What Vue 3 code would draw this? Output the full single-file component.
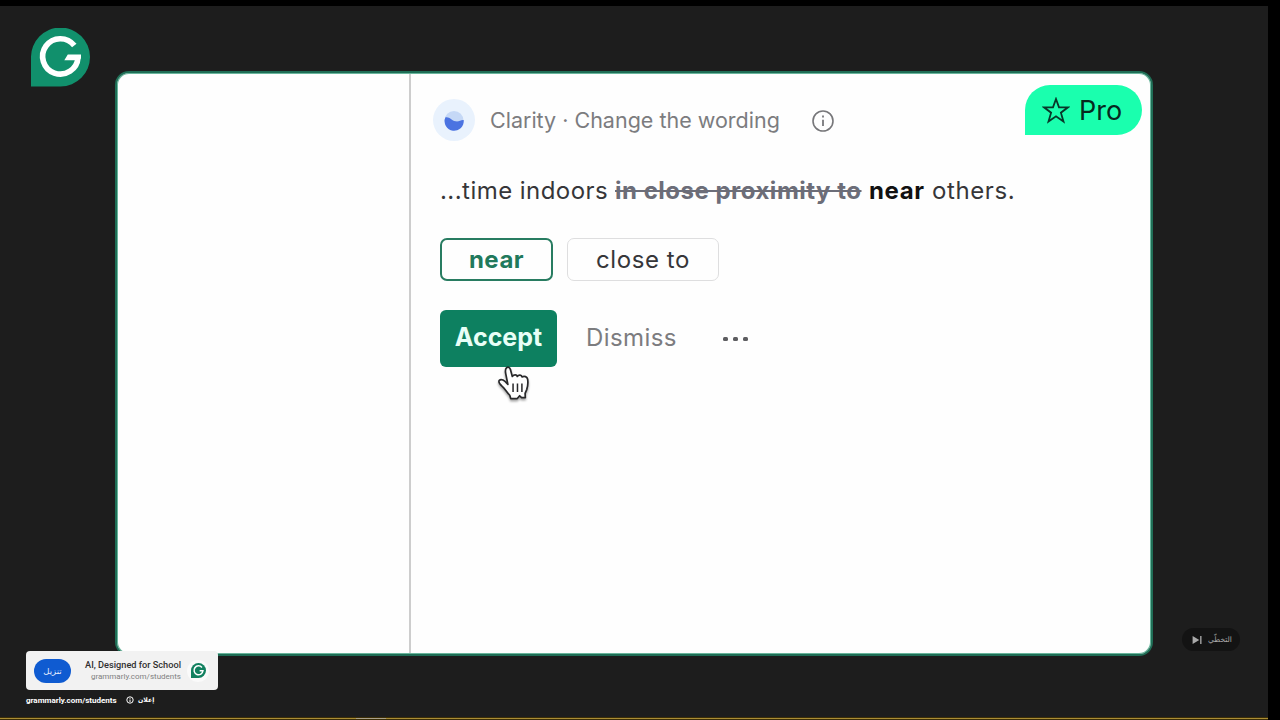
<template>
  <div class="player">
    <div class="video">
      <svg class="brand" viewBox="0 0 59 59">
        <path d="M0 58.500V29.500A29.500 29.500 0 1 1 29.500 58.500Z" fill="#11906c" />
        <path d="M43.300 17.500A17.700 17.700 0 1 0 47 29.500" fill="none" stroke="#fff" stroke-width="5.600" />
        <path d="M36.800 26.500H50V30L47 34H44L45 32.200H33.300Z" fill="#fff" />
      </svg>

      <main class="card">
        <aside class="document"></aside>
        <section class="suggestion">
          <header class="heading">
            <svg class="clarity" viewBox="0 0 42 42">
              <circle cx="21" cy="21" r="21" fill="#e9f2fd" />
              <circle cx="21" cy="21.500" r="9.500" fill="#c5d8f6" />
              <path d="M12.300 18.500C16 17 18.500 21.500 22.500 22.300C26 23 28 20.500 30.700 21A9.600 9.600 0 1 1 12.300 18.500Z" fill="#4b73e1" />
            </svg>
            <span class="category">Clarity · Change the wording</span>
            <svg class="info" viewBox="0 0 22 22" fill="none" stroke="#77777a">
              <circle cx="11" cy="11" r="10" stroke-width="1.600" />
              <path d="M11 9.700V16M11 5.600V7.600" stroke-width="1.800" />
            </svg>
          </header>

          <p class="sentence">
            <span class="before">...time indoors</span>
            <del>in close proximity to</del>
            <strong>near</strong>
            <span class="after">others.</span>
          </p>

          <div class="options">
            <button class="option selected">near</button>
            <button class="option">close to</button>
          </div>

          <div class="actions">
            <button class="accept">Accept</button>
            <button class="dismiss">Dismiss</button>
            <span class="more"><i v-for="n in 3" :key="n"></i></span>
          </div>
        </section>

        <div class="pro">
          <svg viewBox="0 0 28 27">
            <path d="M14 2L17 10.300H26L18.900 15.700L21.500 24.500L14 19.300L6.500 24.500L9.100 15.700L2 10.300H11Z" fill="none" stroke="#08382a" stroke-width="1.800" />
          </svg>
          <span>Pro</span>
        </div>
      </main>

      <svg class="cursor" viewBox="0 0 34 38">
        <path d="M9 2.500C10.800 .8 12.700 2 13.200 4.200L15.200 11.500C17 9.200 20 9.500 20.500 11.500C22 9.500 25 9.800 25.500 12C28 10.500 31 11.800 31.500 14.500C32 18 32 21 30.500 25.500L28.800 29.500L29 34L25 34L23 32L20.500 35H13.500L12.500 31.500C9 28 7.500 24.500 4.500 22C2 19.700 -.1 17.500 1.400 15.700C3.500 13.500 7 15.800 9.500 19L10.500 20L8.200 8.500C7.700 6 7.500 4 9 2.500Z" fill="#fff" stroke="#29292b" stroke-width="1.800" stroke-linejoin="round" />
        <path d="M16 19V28M20.700 19V28M25.400 19V28" stroke="#29292b" stroke-width="1.600" />
      </svg>

      <div class="skip">
        <svg viewBox="0 0 11 9"><path d="M0 0L7.500 4.500L0 9ZM8.500 0H10V9H8.500Z" fill="#aaa" /></svg>
        <span dir="rtl">التخطّي</span>
      </div>
    </div>

    <div class="ad">
      <div class="ad-card">
        <button class="download">تنزيل</button>
        <div class="ad-copy">
          <span class="ad-title">AI, Designed for School</span>
          <span class="ad-url">grammarly.com/students</span>
        </div>
        <span class="ad-logo">
          <svg viewBox="0 0 59 59">
            <path d="M0 59V29.500A29.500 29.500 0 1 1 29.500 59Z" fill="#11805f" />
            <path d="M43 17.500A17.500 17.500 0 1 0 47 30.500H34" fill="none" stroke="#fff" stroke-width="6" />
          </svg>
        </span>
      </div>
      <div class="ad-footer">
        <span class="site">grammarly.com/students</span>
        <svg viewBox="0 0 8 8" fill="none" stroke="#fff">
          <circle cx="4" cy="4" r="3.200" stroke-width="1" />
          <path d="M4 3.500V6M4 2V2.800" stroke-width="1" />
        </svg>
        <span class="label" dir="rtl">إعلان</span>
      </div>
    </div>

    <div class="progress"><i></i></div>
  </div>
</template>

<script setup>
</script>

<style scoped>
.player {
  position: relative;
  width: 1280px;
  height: 720px;
  box-sizing: border-box;
  padding-top: 6px;
  overflow: hidden;
  background: #000;
  font-family: Inter, "Liberation Sans", sans-serif;
}

.video {
  width: 1268px;
  height: 714px;
  box-sizing: border-box;
  padding: 65px 0 0 115px;
  background: #1d1d1d;
}

button {
  margin: 0;
  padding: 0;
  border: 0;
  background: none;
  font-family: inherit;
}

.brand {
  position: absolute;
  left: 31px;
  top: 28px;
  width: 59px;
  height: 59px;
}

.card {
  position: relative;
  display: flex;
  width: 1038px;
  height: 585px;
  box-sizing: border-box;
  border: 2px solid #1f6e56;
  border-radius: 14px;
  background: #fefefe;
  box-shadow: inset 0 0 0 1px #69b59c;
  overflow: hidden;
}

.document {
  width: 292px;
  margin: 1px 0;
  border-right: 2px solid #cdcdcd;
}

.suggestion {
  padding: 26px 0 0 29px;
}

.heading {
  display: flex;
  align-items: center;
  height: 42px;
  margin-left: -7px;
}

.clarity {
  width: 42px;
  height: 42px;
}

.category {
  width: 290px;
  margin-left: 15px;
  color: #7c7c7f;
  font-size: 21.500px;
  white-space: nowrap;
}

.info {
  width: 22px;
  height: 22px;
  margin: 1px 0 0 32px;
}

.sentence {
  display: flex;
  height: 32px;
  margin: 34px 0 0;
  color: #363639;
  font-size: 24px;
  line-height: 32px;
  letter-spacing: .6px;
  white-space: nowrap;
}

.before {
  width: 175px;
  letter-spacing: .45px;
}

del {
  width: 254px;
  color: #6c6d78;
  font-weight: 700;
  letter-spacing: .5px;
  text-decoration-thickness: 2px;
}

strong {
  width: 63px;
  color: #111;
  font-weight: 700;
}

.options {
  display: flex;
  gap: 14px;
  margin-top: 31px;
}

.option {
  width: 152px;
  height: 43px;
  border: 1.500px solid #dededf;
  border-radius: 7px;
  color: #363639;
  font-size: 24px;
  letter-spacing: .6px;
}

.option.selected {
  width: 113px;
  border: 2px solid #287c61;
  color: #21795c;
  font-weight: 700;
  letter-spacing: .5px;
}

.actions {
  display: flex;
  align-items: center;
  margin-top: 29px;
}

.accept {
  width: 117px;
  height: 57px;
  padding-bottom: 3px;
  border-radius: 6px;
  background: #0d8060;
  color: #e8fff7;
  font-size: 25px;
  font-weight: 700;
}

.dismiss {
  width: 91px;
  margin-left: 29px;
  padding-bottom: 3px;
  color: #7c7c7f;
  font-size: 24px;
  letter-spacing: .4px;
}

.more {
  display: flex;
  gap: 5px;
  margin-left: 46px;
}

.more i {
  width: 5px;
  height: 4px;
  border-radius: 1.500px;
  background: #5d5d60;
}

.pro {
  position: absolute;
  right: 9px;
  top: 12px;
  display: flex;
  align-items: center;
  width: 117px;
  height: 50px;
  box-sizing: border-box;
  padding-left: 17px;
  border-radius: 25px 25px 25px 0;
  background: #1affae;
  color: #06291e;
  font-size: 27px;
}

.pro svg {
  width: 28px;
  height: 27px;
  margin-right: 9px;
}

.cursor {
  position: absolute;
  left: 498px;
  top: 365px;
  width: 32px;
  height: 37px;
  filter: drop-shadow(0 2px 1px rgba(0, 0, 0, .35));
}

.skip {
  position: absolute;
  left: 1182px;
  top: 628px;
  display: flex;
  align-items: center;
  width: 58px;
  height: 23px;
  box-sizing: border-box;
  padding-left: 10px;
  border-radius: 12px;
  background: #131313;
  color: #aaa;
  font: 7.500px "DejaVu Sans", sans-serif;
}

.skip svg {
  width: 11px;
  height: 8px;
  margin-right: 5px;
}

.ad {
  position: absolute;
  left: 26px;
  top: 651px;
  width: 192px;
  font-family: Roboto, "DejaVu Sans", sans-serif;
}

.ad-card {
  display: flex;
  align-items: center;
  height: 39px;
  box-sizing: border-box;
  padding: 0 9px 0 8px;
  border-radius: 4px;
  background: #f2f2f2;
}

.download {
  width: 37px;
  height: 24px;
  border-radius: 12px;
  background: #0f5bd1;
  color: #e5edff;
  font-size: 8.500px;
}

.ad-copy {
  display: flex;
  flex: 1;
  flex-direction: column;
  align-items: flex-end;
  margin-right: 6px;
  white-space: nowrap;
}

.ad-title {
  color: #303030;
  font-size: 9.200px;
  font-weight: 500;
  line-height: 13px;
}

.ad-url {
  color: #808080;
  font-size: 8px;
  line-height: 12px;
}

.ad-logo {
  display: flex;
  align-items: center;
  justify-content: center;
  width: 22px;
  height: 22px;
  border-radius: 50%;
  background: #fafafa;
}

.ad-logo svg {
  width: 15px;
  height: 15px;
}

.ad-footer {
  display: flex;
  align-items: center;
  height: 12px;
  margin-top: 4px;
  color: #fff;
  font-size: 8px;
  font-weight: 700;
  white-space: nowrap;
}

.site {
  width: 90px;
}

.ad-footer svg {
  width: 8px;
  height: 8px;
  margin: 0 4px 0 10px;
}

.label {
  font-size: 6.200px;
}

.progress {
  position: absolute;
  left: 0;
  bottom: 0;
  width: 1268px;
  height: 3px;
  box-sizing: border-box;
  border-top: 1px solid #3a2d08;
  border-bottom: 1px solid #3a2d08;
  background: #aa8d35;
}

.progress i {
  display: block;
  width: 30px;
  height: 1px;
  margin-left: 356px;
  background: #aaa18b;
}
</style>

<style>
body {
  margin: 0;
  background: #000;
}
</style>
